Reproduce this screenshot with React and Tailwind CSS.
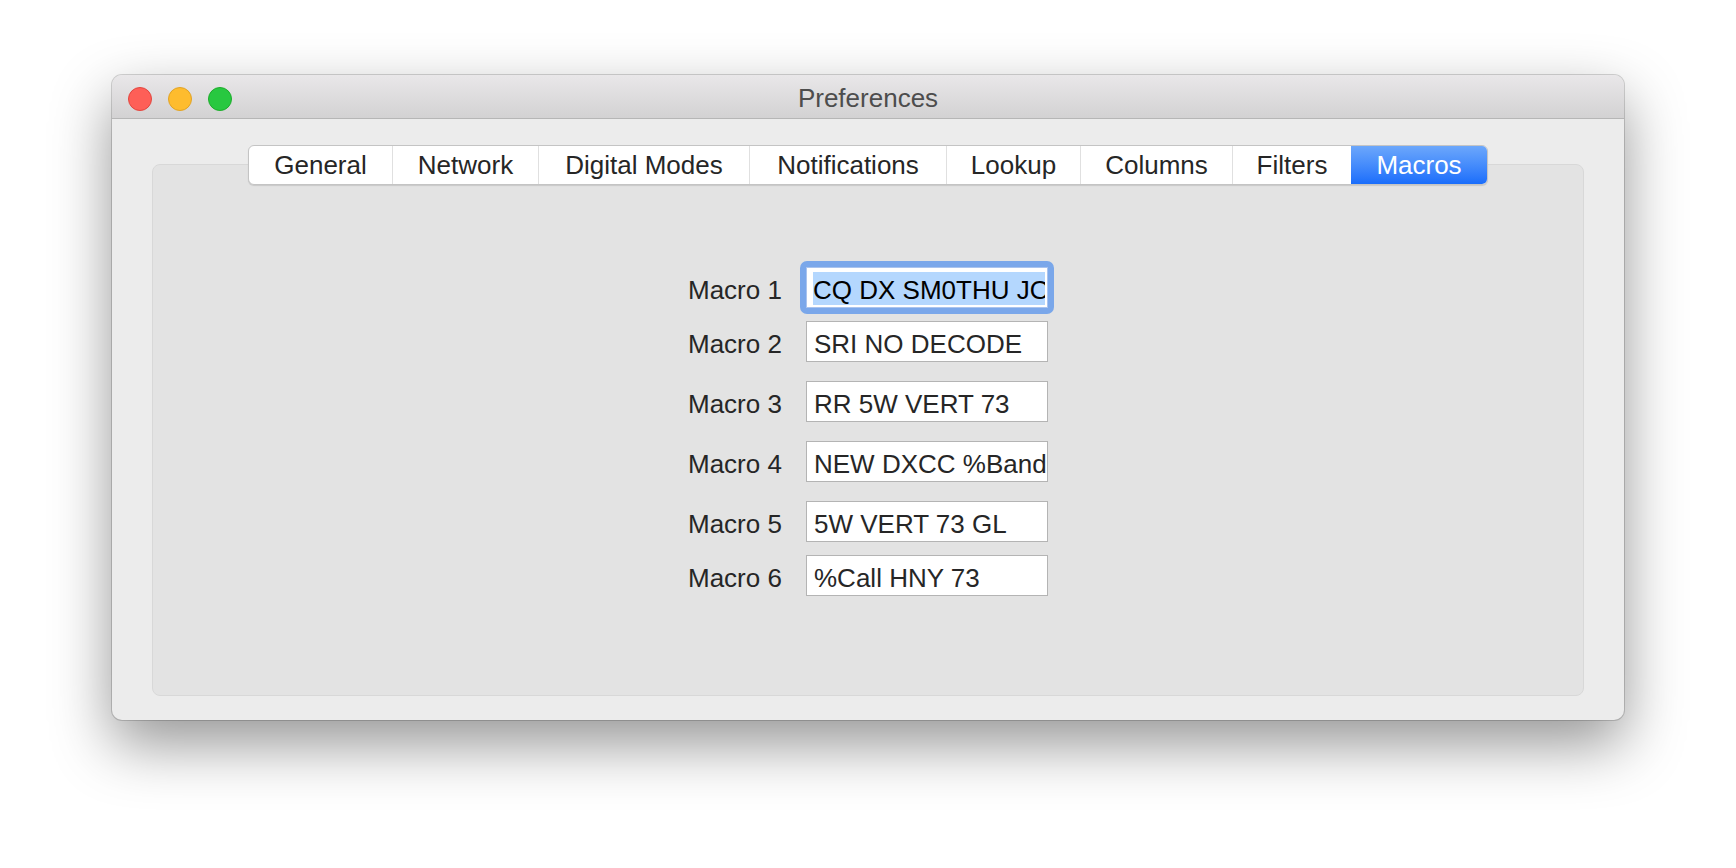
import React from "react";

const tabs = [
  { name: "General", w: "w-[143px]" },
  { name: "Network", w: "w-[146px]" },
  { name: "Digital Modes", w: "w-[211px]" },
  { name: "Notifications", w: "w-[197px]" },
  { name: "Lookup", w: "w-[134px]" },
  { name: "Columns", w: "w-[152px]" },
  { name: "Filters", w: "w-[119px]" },
  { name: "Macros", w: "w-[136px]", active: true },
];

// gap above each row, taken from the reference
const macros = [
  { label: "Macro 1", value: "CQ DX SM0THU JO89", gap: "mt-0", focused: true },
  { label: "Macro 2", value: "SRI NO DECODE", gap: "mt-[13px]" },
  { label: "Macro 3", value: "RR 5W VERT 73", gap: "mt-[19px]" },
  { label: "Macro 4", value: "NEW DXCC %Band", gap: "mt-[19px]" },
  { label: "Macro 5", value: "5W VERT 73 GL", gap: "mt-[19px]" },
  { label: "Macro 6", value: "%Call HNY 73", gap: "mt-[13px]" },
];

const TrafficLights = () => (
  <div className="flex gap-[16px] pl-[16px]">
    <span className="w-[24px] h-[24px] rounded-full bg-[#fe5f57] border border-[#e2463f]" />
    <span className="w-[24px] h-[24px] rounded-full bg-[#febc2e] border border-[#e1a325]" />
    <span className="w-[24px] h-[24px] rounded-full bg-[#28c840] border border-[#1dad2b]" />
  </div>
);

const MacroRow = ({ label, value, gap, focused }) => (
  <div className={`flex items-baseline ${gap}`}>
    <div className="w-[118px] leading-[29px] text-[#262626]">{label}</div>
    {focused ? (
      <div className="relative w-[242px] h-[41px]">
        <div className="absolute -inset-[6px] rounded-[7px] bg-[#7aa7ea]" />
        <div className="relative h-[41px] box-border border border-[#a9c3ee] bg-white pt-[4px] pl-[6px] pr-[2px]">
          <div className="h-[33px] pt-[4px] leading-[29px] bg-[#b4d7fe] text-black whitespace-nowrap overflow-hidden">
            {value}
          </div>
        </div>
      </div>
    ) : (
      <div className="w-[242px] h-[41px] box-border border border-[#b4b4b4] bg-white pt-[8px] pl-[7px] leading-[29px] text-[#262626] whitespace-nowrap overflow-hidden">
        {value}
      </div>
    )}
  </div>
);

export default function App() {
  return (
    <div className="w-[1736px] h-[868px] overflow-hidden bg-white pt-[75px] font-['Liberation_Sans',Arial,sans-serif] text-[26px]">
      <div className="mx-auto w-[1512px] h-[645px] rounded-[10px] overflow-hidden bg-[#ececec] shadow-[0_0_0_1px_rgba(0,0,0,0.16),0_24px_60px_rgba(0,0,0,0.42)]">
        {/* title bar */}
        <div className="h-[44px] box-border border-b border-[#b6b6b6] bg-gradient-to-b from-[#e9e7e9] to-[#d3d2d3] grid grid-cols-[1fr_auto_1fr] items-center pt-[4px]">
          <TrafficLights />
          <div className="leading-[29px] text-[#4d4d4d]">Preferences</div>
          <div />
        </div>

        <div className="pt-[26px] px-[40px] pb-[24px] flex flex-col">
          {/* tab strip */}
          <div className="relative z-10 flex justify-center">
            <div className="flex h-[40px] box-border border border-[#c4c4c4] rounded-[6px] overflow-hidden bg-white shadow-[0_1px_1px_rgba(0,0,0,0.12)]">
              {tabs.map((t, i) =>
                t.active ? (
                  <div
                    key={t.name}
                    className={`${t.w} text-center leading-[38px] text-white bg-gradient-to-b from-[#6ca7fb] to-[#196dfb]`}
                  >
                    {t.name}
                  </div>
                ) : (
                  <div
                    key={t.name}
                    className={`${t.w} text-center leading-[38px] text-[#262626] ${i > 0 ? "border-l border-[#e0e0e0]" : ""}`}
                  >
                    {t.name}
                  </div>
                )
              )}
            </div>
          </div>

          {/* panel */}
          <div className="-mt-[21px] h-[532px] box-border border border-[#d8d8d8] rounded-[8px] bg-[#e3e3e3] pt-[102px] flex justify-center">
            <div className="flex flex-col">
              {macros.map((m) => (
                <MacroRow key={m.label} {...m} />
              ))}
            </div>
          </div>
        </div>
      </div>
    </div>
  );
}
